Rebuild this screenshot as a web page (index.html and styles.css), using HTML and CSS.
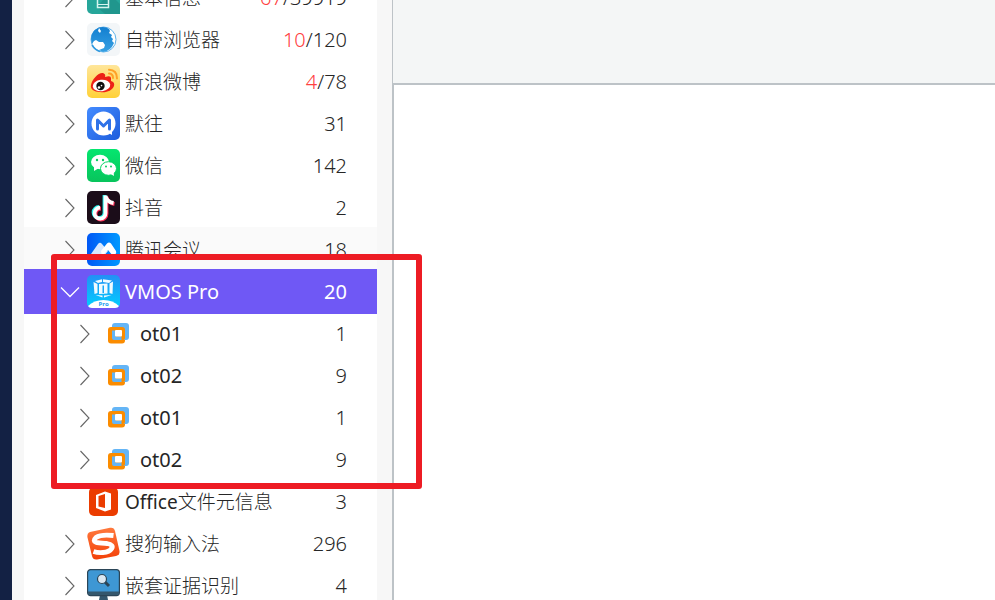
FILE: index.html
```
<!DOCTYPE html>
<html lang="zh-CN">
<head>
<meta charset="utf-8">
<title>VMOS Pro</title>
<link rel="stylesheet" href="styles.css">
</head>
<body>
<svg class="defs" aria-hidden="true">
  <defs>
    <linearGradient id="sun" x2="0" y2="1"><stop stop-color="#ffe69a"/><stop offset="1" stop-color="#ffd137"/></linearGradient>
    <linearGradient id="blue" x2="1" y2="1"><stop stop-color="#438bff"/><stop offset="1" stop-color="#1d5ddc"/></linearGradient>
    <linearGradient id="green" x2="0" y2="1"><stop stop-color="#05e66f"/><stop offset="1" stop-color="#08c45c"/></linearGradient>
    <linearGradient id="meet" x2="1"><stop stop-color="#0057f5"/><stop offset="1" stop-color="#0099ff"/></linearGradient>
    <linearGradient id="vm" x2="0" y2="1"><stop stop-color="#238ff5"/><stop offset="1" stop-color="#00d0ff"/></linearGradient>
    <linearGradient id="sogou" x2="0" y2="1"><stop stop-color="#ff793d"/><stop offset="1" stop-color="#f34108"/></linearGradient>
    <linearGradient id="globe" x2="0" y2="1"><stop stop-color="#137fd0"/><stop offset="1" stop-color="#36a0e3"/></linearGradient>
    <symbol id="chev" viewBox="0 0 22 22"><path d="M6.500 2 15 11 6.500 20" fill="none" stroke="currentColor" stroke-width="1.100"/></symbol>
    <symbol id="chev-down" viewBox="0 0 22 22"><path d="M2 6.500 11 15.500 20 6.500" fill="none" stroke="currentColor" stroke-width="1.300"/></symbol>
    <symbol id="machine" viewBox="0 0 22 22">
      <rect x="4" y="0" width="17" height="17" rx="3" fill="#64b5f6"/>
      <path d="M3 4H14Q17 4 17 7V17.500Q17 20.500 14 20.500H3Q0 20.500 0 17.500V7Q0 4 3 4Z" fill="#fb8c00"/>
      <path d="M4 7.500V15Q4 17 6 17H17V13.500H7.500V7.500Z" fill="#64b5f6"/>
      <path d="M13.500 7H17V15Q17 17 15 17H13.500Z" fill="#fb8c00"/>
      <rect x="7" y="7" width="7" height="6.500" rx="1" fill="#fff"/>
    </symbol>
  </defs>
</svg>
<div class="app">
  <div class="rail"></div>
  <nav class="side" aria-label="应用列表">
    <ul class="tree">
      <li class="row">
        <button class="toggle" aria-label="展开基本信息"><svg><use href="#chev"/></svg></button>
        <svg class="icon" viewBox="0 0 33 33"><rect width="33" height="33" rx="5" fill="#26a69a"/><path d="M22 12 33 23V33H18L10 26Z" fill="#20968d"/><path d="M10.500 4V26.500H21.500V4" fill="none" stroke="#d6f5ef" stroke-width="1.500"/><path d="M10 23.500H22" stroke="#d6f5ef"/></svg>
        <span class="name">基本信息</span><span class="count"><b>67</b>/39919</span>
      </li>
      <li class="row">
        <button class="toggle" aria-label="展开自带浏览器"><svg><use href="#chev"/></svg></button>
        <svg class="icon" viewBox="0 0 33 33"><rect width="33" height="33" rx="5" fill="#f3f6f8"/><circle cx="16.500" cy="16.500" r="12.500" fill="#fff" stroke="#5fb2ea" stroke-width="1"/><path d="M4 16Q4 8 12 4.500Q18 3 22 6L23 8 22 10 25 12 24 14 26 16 25 18 27 20Q24 28 16 29L12 27 17 25 18 22 16 19 12 19 9 17 7 18 5 21Z" fill="url(#globe)"/><path d="M12 5 14 8 13 10 11 8Z" fill="#fff"/><path d="M5 22Q8 27 13 28.500" fill="none" stroke="#319adf" stroke-width="1.600"/></svg>
        <span class="name">自带浏览器</span><span class="count"><b>10</b>/120</span>
      </li>
      <li class="row">
        <button class="toggle" aria-label="展开新浪微博"><svg><use href="#chev"/></svg></button>
        <svg class="icon" viewBox="0 0 33 33"><rect width="33" height="33" rx="5" fill="url(#sun)"/><path d="M4 20C5 14 12 7 16 8Q19 9 18 12 24 10 24 13L24 16Q28 17 27 21C25 26 19 28 13 27 7 27 3 24 4 20Z" fill="#ed2117"/><ellipse cx="14.500" cy="20.500" rx="8.800" ry="5.800" fill="#fff" transform="rotate(-7 14.500 20.500)"/><circle cx="13.500" cy="21" r="4.200" fill="#111"/><circle cx="12" cy="22.500" r="1.300" fill="#fff"/><circle cx="14.500" cy="20.600" r=".8" fill="#fff"/><path d="M22 8.500Q26 8.500 26 13M22 4.800Q30 5 30 13.500" fill="none" stroke="#ffa126" stroke-width="2" stroke-linecap="round"/></svg>
        <span class="name">新浪微博</span><span class="count"><b>4</b>/78</span>
      </li>
      <li class="row">
        <button class="toggle" aria-label="展开默往"><svg><use href="#chev"/></svg></button>
        <svg class="icon" viewBox="0 0 33 33"><rect width="33" height="33" rx="5" fill="url(#blue)"/><circle cx="16.500" cy="16.500" r="12" fill="#fff"/><path d="M20 25 25 28V23Z" fill="#fff"/><path d="M10.500 22V13L16.500 19 22.500 13V22" fill="none" stroke="#2f72e8" stroke-width="3" stroke-linecap="round" stroke-linejoin="round"/></svg>
        <span class="name">默往</span><span class="count">31</span>
      </li>
      <li class="row">
        <button class="toggle" aria-label="展开微信"><svg><use href="#chev"/></svg></button>
        <svg class="icon" viewBox="0 0 33 33"><rect width="33" height="33" rx="5" fill="url(#green)"/><ellipse cx="13" cy="13" rx="9" ry="7.200" fill="#fff"/><path d="M7 17 7 22 12 19Z" fill="#fff"/><ellipse cx="21.500" cy="19.500" rx="8" ry="6.800" fill="#fff" stroke="#06d466" stroke-width="1"/><path d="M23 24.500 27 27 26.500 22Z" fill="#fff"/><g fill="#07cd62"><circle cx="10" cy="11" r="1.200"/><circle cx="16" cy="11" r="1.200"/><circle cx="19" cy="17.500" r="1"/><circle cx="24" cy="17.500" r="1"/></g></svg>
        <span class="name">微信</span><span class="count">142</span>
      </li>
      <li class="row">
        <button class="toggle" aria-label="展开抖音"><svg><use href="#chev"/></svg></button>
        <svg class="icon" viewBox="0 0 33 33"><rect width="33" height="33" rx="5" fill="#1b0d19"/><g fill="none" stroke-width="3.800"><path d="M17.500 4V22A5.500 5.500 0 1 1 12 16" stroke="#25f4ee"/><path d="M19.500 6V23A5.500 5.500 0 1 1 14 17.500M19.500 6Q21 12 27.500 13" stroke="#fe2c55"/><path d="M18.500 4.500V22A5.500 5.500 0 1 1 13 16.700M18.500 5Q20 11 26.500 12" stroke="#fff"/></g></svg>
        <span class="name">抖音</span><span class="count">2</span>
      </li>
      <li class="row hover">
        <button class="toggle" aria-label="展开腾讯会议"><svg><use href="#chev"/></svg></button>
        <svg class="icon" viewBox="0 0 33 33"><rect width="33" height="33" rx="5" fill="url(#meet)"/><path d="M4 21 11 11Q13 8.500 15 11L21 18 17 23H6Q3 23 4 21Z" fill="#d8e8ff"/><path d="M14 18 20 10.500Q22 8.500 24 10.500L29 18Q30 20 28 21.500L26 23 21 17 15 23Z" fill="#fff"/></svg>
        <span class="name">腾讯会议</span><span class="count">18</span>
      </li>
      <li class="row selected">
        <button class="toggle" aria-label="收起 VMOS Pro" aria-expanded="true"><svg><use href="#chev-down"/></svg></button>
        <svg class="icon" viewBox="0 0 33 33"><rect width="33" height="33" rx="5" fill="url(#vm)"/><path d="M1 31Q7 25 16.500 25T32 31Q31 33 28 33H5Q2 33 1 31Z" fill="#fff"/><g fill="#f2fbff"><path d="M8 6 15 4.300V7L11 8ZM16 4.300 25 5.500 22 8 16 7ZM6.500 7 10.500 9V18L7.500 19ZM12 9 20.500 8.500V18.500L12 19ZM22.500 8.500 26 6.500 25.500 19 22.500 18ZM8.500 20 15.500 20.500V22.500ZM17 20.500 24.500 20 17 22.500Z"/></g><path d="M15.500 10.500H17V18H15.500Z" fill="#16a8fa"/><text class="pro" x="16.500" y="31">Pro</text></svg>
        <span class="name">VMOS Pro</span><span class="count">20</span>
      </li>
      <li class="row child">
        <button class="toggle" aria-label="展开 ot01"><svg><use href="#chev"/></svg></button>
        <svg class="icon"><use href="#machine"/></svg>
        <span class="name">ot01</span><span class="count">1</span>
      </li>
      <li class="row child">
        <button class="toggle" aria-label="展开 ot02"><svg><use href="#chev"/></svg></button>
        <svg class="icon"><use href="#machine"/></svg>
        <span class="name">ot02</span><span class="count">9</span>
      </li>
      <li class="row child">
        <button class="toggle" aria-label="展开 ot01"><svg><use href="#chev"/></svg></button>
        <svg class="icon"><use href="#machine"/></svg>
        <span class="name">ot01</span><span class="count">1</span>
      </li>
      <li class="row child">
        <button class="toggle" aria-label="展开 ot02"><svg><use href="#chev"/></svg></button>
        <svg class="icon"><use href="#machine"/></svg>
        <span class="name">ot02</span><span class="count">9</span>
      </li>
      <li class="row">
        <span class="toggle"></span>
        <svg class="icon" viewBox="0 0 33 33"><rect x="2" y="2" width="29" height="29" rx="5" fill="#eb3c00"/><path fill-rule="evenodd" d="M9 10 18 6.500 24 8.500V24.500L18 26.500 9 23ZM11.500 11V21.500L18 23V9Z" fill="#fff"/></svg>
        <span class="name"><span class="latin">Office</span>文件元信息</span><span class="count">3</span>
      </li>
      <li class="row">
        <button class="toggle" aria-label="展开搜狗输入法"><svg><use href="#chev"/></svg></button>
        <svg class="icon" viewBox="0 0 33 33"><path d="M3 5 23 .8Q27 0 28 4L32.500 24Q33 28 29 29L10 32.500Q6 33 5 29L.4 10Q0 6 3 5Z" fill="url(#sogou)"/><path d="M26.500 8.500Q14 7 9 10.500C3 16 13 16 20 16.500 30 18 24 25 16 25.500Q11 26 6.500 24.500" fill="none" stroke="#fff" stroke-width="4.800"/></svg>
        <span class="name">搜狗输入法</span><span class="count">296</span>
      </li>
      <li class="row">
        <button class="toggle" aria-label="展开嵌套证据识别"><svg><use href="#chev"/></svg></button>
        <svg class="icon" viewBox="0 0 33 33"><path d="M13 26H20L21 31H25V33H8V31H12Z" fill="#34576d"/><rect x=".6" y=".6" width="31.800" height="26" rx="3" fill="#3e97d4" stroke="#2b4557" stroke-width="1.200"/><path d="M1 22.500H32V24Q32 26 29 26H4Q1 26 1 24Z" fill="#34576d"/><path d="m18 13 4 4" stroke="#2b4557" stroke-width="3"/><circle cx="15" cy="10" r="4.500" fill="#dce8f2" stroke="#2b4557" stroke-width="1.200"/></svg>
        <span class="name">嵌套证据识别</span><span class="count">4</span>
      </li>
    </ul>
  </nav>
  <main class="main">
    <header class="bar"></header>
    <section class="view"></section>
  </main>
  <div class="marker"></div>
</div>
</body>
</html>
```
FILE: styles.css
```
* { box-sizing: border-box; }
body {
  margin: 0;
  color: #262626;
  font: 19px/28px "Noto Sans", "Noto Sans CJK SC", sans-serif;
}
.defs { position: absolute; width: 0; height: 0; }
.app {
  position: relative;
  display: flex;
  height: 100vh;
  overflow: hidden;
}
.rail { flex: 0 0 12px; background: #132144; }
.side {
  flex: 0 0 380px;
  padding: 0 15px 0 12px;
  background: #f7f7f7;
}
/* The list is scrolled part of the way through its first row. */
.tree {
  margin: -25px 0 0;
  padding: 0;
  list-style: none;
  background: #fff;
}
.row {
  display: flex;
  align-items: center;
  height: 45px;
  margin-bottom: -3px;
  padding: 0 30px 0 35px;
}
.toggle {
  flex: none;
  width: 22px;
  height: 22px;
  margin-right: 6px;
  padding: 0;
  border: 0;
  background: none;
  color: #666;
}
.toggle svg { display: block; width: 22px; height: 22px; }
.icon { flex: none; width: 33px; height: 33px; margin-right: 5px; }
.name { flex: 1; white-space: nowrap; font-weight: 300; }
.latin { font-weight: 400; }
.count { color: #262626; font-size: 20px; font-weight: 300; }
.count b { color: #ff4040; font-weight: 300; }
.hover { background: #fafafa; }
.selected { position: relative; background: #6f58f5; }
.selected .toggle, .selected .name, .selected .count { color: #fff; }
.selected .name, .child .name { font-size: 20px; font-weight: 400; }
.selected .count { font-weight: 400; }
.child { padding-left: 50px; }
.child .toggle { margin-right: 12px; }
.child .icon { width: 22px; height: 22px; margin-right: 10px; }
.pro {
  fill: #1a9df0;
  font: bold 6px "Open Sans", sans-serif;
  text-anchor: middle;
}
.main {
  flex: 1;
  display: flex;
  flex-direction: column;
  border-left: 1px solid #bdc3c7;
}
.bar { flex: 0 0 83px; background: #f4f6f6; }
.view {
  flex: 1;
  border-top: 2px solid #bdc3c7;
  border-left: 1px solid #bdc3c7;
  background: #fff;
}
.marker {
  position: absolute;
  top: 254px;
  left: 51px;
  width: 371px;
  height: 235px;
  border: 6px solid #ed1c24;
  border-radius: 3px;
  pointer-events: none;
}
```
